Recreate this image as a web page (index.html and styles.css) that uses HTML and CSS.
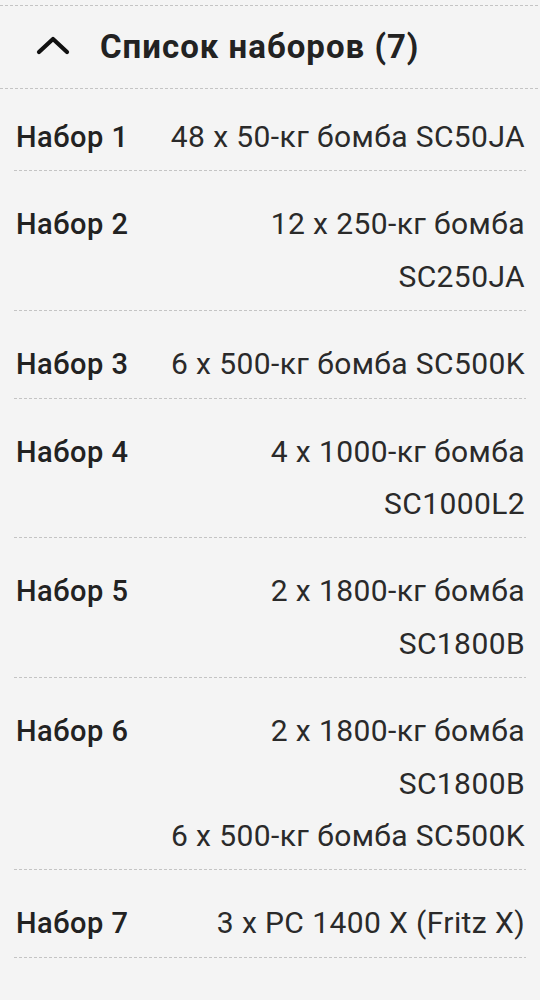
FILE: index.html
```html
<!DOCTYPE html>
<html lang="ru">
<head>
<meta charset="utf-8">
<link rel="stylesheet" href="styles.css">
</head>
<body>
<div class="panel">
  <div class="rule rule-full"></div>
  <div class="header">
    <svg class="chevron" viewBox="0 0 34 20" width="34" height="20" aria-hidden="true">
      <polyline points="3,17 17,4 31,17" fill="none" stroke="#111" stroke-width="4.2" stroke-linecap="round" stroke-linejoin="round"/>
    </svg>
    <span class="title">Список наборов (7)</span>
  </div>
  <div class="rule rule-full"></div>
  <ul class="sets">
    <li class="set first"><span class="label">Набор 1</span><span class="value">48 x 50-кг бомба SC50JA</span></li>
    <li class="set"><span class="label">Набор 2</span><span class="value">12 x 250-кг бомба SC250JA</span></li>
    <li class="set"><span class="label">Набор 3</span><span class="value">6 x 500-кг бомба SC500K</span></li>
    <li class="set"><span class="label">Набор 4</span><span class="value">4 x 1000-кг бомба SC1000L2</span></li>
    <li class="set"><span class="label">Набор 5</span><span class="value">2 x 1800-кг бомба SC1800B</span></li>
    <li class="set"><span class="label">Набор 6</span><span class="value">2 x 1800-кг бомба SC1800B<br>6 x 500-кг бомба SC500K</span></li>
    <li class="set"><span class="label">Набор 7</span><span class="value">3 x PC 1400 X (Fritz X)</span></li>
  </ul>
</div>
</body>
</html>
```

FILE: styles.css
```css
html, body {
  margin: 0;
  padding: 0;
  background: #f4f4f4;
}

body {
  font-family: Roboto, "Noto Sans", "Liberation Sans", sans-serif;
  color: #222;
  width: 540px;
  height: 1000px;
  overflow: hidden;
}

.panel {
  padding-top: 5px;
}

.rule {
  height: 1px;
  background-image: repeating-linear-gradient(to right, #c4c4c4 0 3px, transparent 3px 5px);
}

.header {
  display: flex;
  align-items: center;
  height: 82px;
  padding-left: 36px;
  box-sizing: border-box;
}

.chevron {
  display: block;
  flex: none;
  margin-top: -4px;
}

.title {
  margin-left: 30px;
  font-size: 33px;
  letter-spacing: 1px;
  font-weight: 700;
  color: #222;
  line-height: 52px;
}

.sets {
  list-style: none;
  margin: 0;
  padding: 0 14px;
}

.set {
  display: flex;
  justify-content: space-between;
  align-items: flex-start;
  gap: 20px;
  padding: 27px 1px 8px 2px;
  font-size: 30px;
  line-height: 52.4px;
  background-image: repeating-linear-gradient(to right, #c4c4c4 0 3px, transparent 3px 5px);
  background-size: 100% 1px;
  background-repeat: no-repeat;
  background-position: left bottom;
}

.set.first {
  padding-top: 22px;
}

.label {
  flex: none;
  font-size: 29px;
  letter-spacing: 0.5px;
  font-weight: 500;
  color: #222;
}

.value {
  width: 360px;
  text-align: right;
  letter-spacing: 0.4px;
  color: #2a2a2a;
  font-weight: 400;
}
```
